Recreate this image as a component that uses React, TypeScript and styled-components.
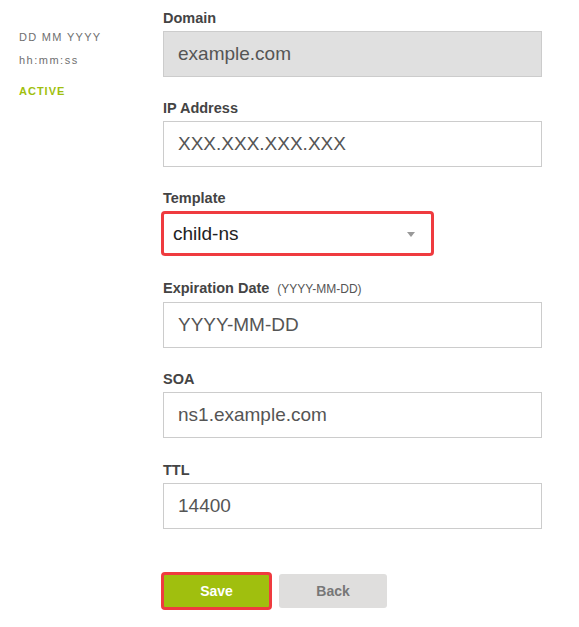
import React from "react";
import styled, { createGlobalStyle } from "styled-components";

const GlobalStyle = createGlobalStyle`
    body {
        margin: 0;
        background: #ffffff;
        font-family: "Liberation Sans", Arial, sans-serif;
    }
`;

type FieldDef = {
    label: string;
    hint?: string;
    value: string;
    disabled?: boolean;
};

const topFields: FieldDef[] = [
    { label: "Domain", value: "example.com", disabled: true },
    { label: "IP Address", value: "XXX.XXX.XXX.XXX" },
];

const bottomFields: FieldDef[] = [
    { label: "Expiration Date", hint: "(YYYY-MM-DD)", value: "YYYY-MM-DD" },
    { label: "SOA", value: "ns1.example.com" },
    { label: "TTL", value: "14400" },
];

const App = () => {
    const renderField = (field: FieldDef) => (
        <Field key={field.label}>
            <Label>
                {field.label}
                {field.hint && <Hint>{field.hint}</Hint>}
            </Label>
            <TextInput defaultValue={field.value} readOnly $disabled={field.disabled} />
        </Field>
    );

    return (
        <Page>
            <GlobalStyle />
            <Sidebar>
                <DateText>DD MM YYYY</DateText>
                <TimeText>hh:mm:ss</TimeText>
                <Status>ACTIVE</Status>
            </Sidebar>
            <Form onSubmit={(e) => e.preventDefault()}>
                {topFields.map(renderField)}
                <Field>
                    <Label>Template</Label>
                    <SelectWrap>
                        <Select defaultValue="child-ns">
                            <option value="child-ns">child-ns</option>
                            <option value="parent">parent</option>
                        </Select>
                        <Caret />
                    </SelectWrap>
                </Field>
                {bottomFields.map(renderField)}
                <Actions>
                    <SaveButton type="submit">Save</SaveButton>
                    <BackButton type="button">Back</BackButton>
                </Actions>
            </Form>
        </Page>
    );
};

export default App;

const Page = styled.div`
    display: flex;
    width: 579px;
    min-height: 627px;
`;

const Sidebar = styled.aside`
    width: 163px;
    box-sizing: border-box;
    padding: 30.2px 0 0 19px;
    display: flex;
    flex-direction: column;
    align-items: flex-start;
`;

const DateText = styled.div`
    font-size: 11px;
    line-height: 14px;
    letter-spacing: 1.3px;
    color: #6f6f6f;
    margin-bottom: 9.3px;
`;

const TimeText = styled.div`
    font-size: 11px;
    line-height: 14px;
    letter-spacing: 1.5px;
    color: #6f6f6f;
    margin-bottom: 16.7px;
`;

const Status = styled.div`
    font-size: 11px;
    line-height: 14px;
    font-weight: bold;
    letter-spacing: 1px;
    color: #a0bf0e;
`;

const Form = styled.form`
    width: 379px;
    padding-top: 9.6px;
    display: flex;
    flex-direction: column;
`;

const Field = styled.div`
    display: flex;
    flex-direction: column;
    margin-bottom: 23.4px;
`;

const Label = styled.label`
    display: block;
    font-size: 14.5px;
    line-height: 17px;
    font-weight: bold;
    color: #444;
    margin-bottom: 4px;
`;

const Hint = styled.span`
    font-size: 12px;
    font-weight: normal;
    color: #555;
    margin-left: 8px;
`;

const TextInput = styled.input<{ $disabled?: boolean }>`
    box-sizing: border-box;
    width: 379px;
    height: 46px;
    margin: 0;
    padding: 0 14px;
    border: 1px solid #cccccc;
    border-radius: 0;
    background: ${(p) => (p.$disabled ? "#e0e0e0" : "#ffffff")};
    font-family: "Liberation Sans", Arial, sans-serif;
    font-size: 19px;
    color: #555;
    outline: none;
`;

const SelectWrap = styled.div`
    position: relative;
    width: 273px;
    height: 45px;
    margin-left: -2px;
`;

const Select = styled.select`
    appearance: none;
    box-sizing: border-box;
    width: 100%;
    height: 100%;
    margin: 0;
    padding: 0 0 0 9px;
    border: 3px solid #ef3b3f;
    border-radius: 4px;
    background: #ffffff;
    font-family: "Liberation Sans", Arial, sans-serif;
    font-size: 19px;
    color: #222;
    outline: none;
`;

const Caret = styled.span`
    position: absolute;
    top: 21px;
    right: 19px;
    width: 0;
    height: 0;
    border-left: 4.5px solid transparent;
    border-right: 4.5px solid transparent;
    border-top: 5px solid #999;
    pointer-events: none;
`;

const Actions = styled.div`
    display: flex;
    align-items: center;
    gap: 7px;
    margin-top: 20px;
    margin-left: -2px;
`;

const SaveButton = styled.button`
    box-sizing: border-box;
    width: 111px;
    height: 38px;
    border: 3px solid #ef3b3f;
    border-radius: 4px;
    background: #a0bf0e;
    color: #ffffff;
    font-family: "Liberation Sans", Arial, sans-serif;
    font-size: 14px;
    font-weight: bold;
    cursor: pointer;
`;

const BackButton = styled.button`
    box-sizing: border-box;
    width: 108px;
    height: 34px;
    border: none;
    border-radius: 3px;
    background: #dfdedd;
    color: #777;
    font-family: "Liberation Sans", Arial, sans-serif;
    font-size: 14px;
    font-weight: bold;
    cursor: pointer;
`;
